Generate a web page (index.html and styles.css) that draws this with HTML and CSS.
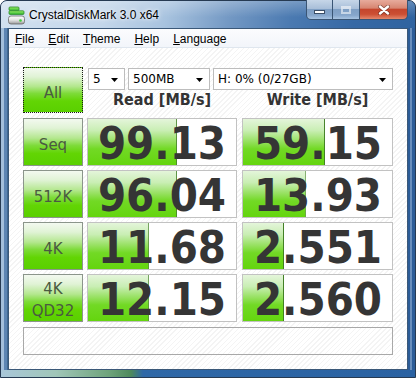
FILE: index.html
```html
<!DOCTYPE html>
<html>
<head>
<meta charset="utf-8">
<link rel="stylesheet" href="styles.css">
</head>
<body>
<div class="window">
  <div class="titlebar">
    <svg class="appicon" width="17" height="19" viewBox="0 0 17 19">
      <defs>
        <linearGradient id="gg" x1="0" y1="0" x2="0" y2="1">
          <stop offset="0" stop-color="#9ef06a"/>
          <stop offset="1" stop-color="#2fb42f"/>
        </linearGradient>
        <linearGradient id="dg" x1="0" y1="0" x2="0" y2="1">
          <stop offset="0" stop-color="#ffffff"/>
          <stop offset="0.5" stop-color="#e4e4e4"/>
          <stop offset="1" stop-color="#9a9a9a"/>
        </linearGradient>
      </defs>
      <rect x="1" y="1" width="10" height="3.6" rx="1" fill="url(#gg)" stroke="#2a8a2a" stroke-width="0.8"/>
      <rect x="1" y="4.8" width="15" height="3.6" rx="1" fill="url(#gg)" stroke="#2a8a2a" stroke-width="0.8"/>
      <rect x="0.5" y="10" width="16" height="8" rx="2.5" fill="url(#dg)" stroke="#6a6a6a" stroke-width="0.8"/>
      <circle cx="12.5" cy="14.5" r="1.3" fill="#3ccf3c"/>
    </svg>
    <span class="title">CrystalDiskMark 3.0 x64</span>
    <div class="caption">
      <div class="cbtn min"><span class="g-min"></span></div>
      <div class="cbtn max"><span class="g-max"></span></div>
      <div class="cbtn close">
        <svg width="12" height="10" viewBox="0 0 12 10">
          <path d="M2 1.5 L10 8.5 M10 1.5 L2 8.5" stroke="#4a1e16" stroke-width="4" stroke-linecap="round" opacity="0.55"/>
          <path d="M2 1.5 L10 8.5 M10 1.5 L2 8.5" stroke="#ffffff" stroke-width="2.4" stroke-linecap="round"/>
        </svg>
      </div>
    </div>
  </div>
  <div class="client">
    <div class="menubar">
      <span><u>F</u>ile</span>
      <span><u>E</u>dit</span>
      <span><u>T</u>heme</span>
      <span><u>H</u>elp</span>
      <span><u>L</u>anguage</span>
    </div>
    <div class="content">
      <div class="top">
        <div class="btn all">All</div>
        <div class="controls">
          <div class="combos">
            <div class="combo c1"><span>5</span><svg class="arrow" width="7" height="4" viewBox="0 0 7 4"><path d="M0 0H7L3.5 4Z" fill="#000"/></svg></div>
            <div class="combo c2"><span>500MB</span><svg class="arrow" width="7" height="4" viewBox="0 0 7 4"><path d="M0 0H7L3.5 4Z" fill="#000"/></svg></div>
            <div class="combo c3"><span>H: 0% (0/27GB)</span><svg class="arrow" width="7" height="4" viewBox="0 0 7 4"><path d="M0 0H7L3.5 4Z" fill="#000"/></svg></div>
          </div>
          <div class="headers">
            <div class="hdr read">Read [MB/s]</div>
            <div class="hdr write">Write [MB/s]</div>
          </div>
        </div>
      </div>
      <div class="row">
        <div class="btn">Seq</div>
        <div class="cell read" style="--w:60%"><span class="val">99.13</span></div>
        <div class="cell write" style="--w:55%"><span class="val">59.15</span></div>
      </div>
      <div class="row">
        <div class="btn">512K</div>
        <div class="cell read" style="--w:60%"><span class="val">96.04</span></div>
        <div class="cell write" style="--w:42%"><span class="val">13.93</span></div>
      </div>
      <div class="row">
        <div class="btn">4K</div>
        <div class="cell read" style="--w:41%"><span class="val">11.68</span></div>
        <div class="cell write" style="--w:27.5%"><span class="val">2.551</span></div>
      </div>
      <div class="row">
        <div class="btn two">4K<br>QD32</div>
        <div class="cell read" style="--w:41%"><span class="val">12.15</span></div>
        <div class="cell write" style="--w:27.5%"><span class="val">2.560</span></div>
      </div>
      <div class="status"></div>
    </div>
  </div>
</div>
</body>
</html>
```

FILE: styles.css
```css
* { box-sizing: border-box; }
html, body { margin: 0; padding: 0; }
body {
  width: 416px;
  height: 378px;
  overflow: hidden;
  background: #ffffff;
  font-family: "DejaVu Sans", sans-serif;
}

.window {
  width: 416px;
  height: 378px;
  border: 1px solid #263a52;
  border-radius: 7px 7px 0 0;
  display: flex;
  flex-direction: column;
  padding: 0 7px 7px;
  background:
    linear-gradient(to right, #a9c7d9 0, #a0c6b8 55px, #6ea37b 108px, #4d895c 130px, #2f68a7 142px, #2a62a2 100%) 0 100% / 100% 7px no-repeat,
    linear-gradient(to right, #a3bfdb 0 3px, #5d85b3 3px 6px, #3f6891 6px) 0 0 / 7px 100% no-repeat,
    linear-gradient(to right, #2c5c97 0 2px, #6a8fbc 2px 4px, #2d5d98 4px) 100% 0 / 7px 100% no-repeat,
    #4a76aa;
}

.titlebar {
  margin: 0 -7px;
  height: 27px;
  padding-left: 7px;
  display: flex;
  align-items: center;
  border-radius: 6px 6px 0 0;
  background:
    linear-gradient(to bottom, rgba(255,255,255,0.25), rgba(255,255,255,0) 60%),
    linear-gradient(100deg, #d2e1f0 0%, #c3d6ea 25%, #a8c3df 40%, #7499c4 55%, #4b7ab1 70%, #3669a5 85%, #2f63a0 100%);
}
.appicon { flex: none; margin-right: 4px; margin-top: 1px; }
.title {
  font-family: "Liberation Sans", Arial, sans-serif;
  font-size: 12px;
  color: #000;
  text-shadow: 0 0 6px #fff, 0 0 3px rgba(255,255,255,0.9);
}
.caption {
  display: flex;
  margin: -1px 7px 0 auto;
  align-self: flex-start;
  height: 20px;
}
.cbtn {
  height: 20px;
  border: 1px solid #3a5574;
  border-top: none;
  display: flex;
  justify-content: center;
  align-items: center;
}
.min, .max {
  width: 27px;
  background: linear-gradient(to bottom, #c6d6e8 0%, #a9bfd9 45%, #7f9fc4 50%, #86a6cb 80%, #a8c4e2 100%);
}
.min { border-radius: 0 0 0 5px; align-items: flex-end; padding-bottom: 5px; }
.max { border-left: none; }
.close {
  width: 48px;
  border-left: none;
  border-radius: 0 0 5px 0;
  background: linear-gradient(to bottom, #e7ab9c 0%, #d78672 42%, #c5462d 50%, #cc4f33 75%, #e4876b 100%);
  padding-top: 1px;
}
.g-min {
  width: 11px;
  height: 4px;
  background: #fff;
  border: 1px solid #3b4e66;
}
.g-max {
  width: 10px;
  height: 8px;
  border: 2px solid rgba(255,255,255,0.55);
  border-top-width: 3px;
}

.client {
  flex: 1;
  display: flex;
  flex-direction: column;
  border: 1px solid #3b5878;
  background: repeating-linear-gradient(135deg, #ffffff 0 2.6px, #f4f4f4 2.6px 3.6px);
}
.menubar {
  height: 19px;
  display: flex;
  align-items: center;
  gap: 14px;
  padding: 1px 0 0 6px;
  border-bottom: 1px solid #dfe6ee;
  background: linear-gradient(to bottom, #fbfcfe, #f2f5fa);
  font-family: "Liberation Sans", Arial, sans-serif;
  font-size: 12px;
  color: #000;
}
.menubar u { text-decoration: underline; text-underline-offset: 1px; }

.content {
  flex: 1;
  padding: 19px 0 0 14px;
}
.top {
  display: flex;
  gap: 4px;
  height: 46px;
  margin-bottom: 5px;
}
.btn {
  width: 60px;
  flex: none;
  border: 1px solid #8b958b;
  background: linear-gradient(to bottom, #f3f9f0 0%, #e0f3d5 20%, #b3e78d 42%, #7ddb38 58%, #62d504 75%, #5ad000 100%);
  display: flex;
  align-items: center;
  justify-content: center;
  text-align: center;
  font-family: "DejaVu Sans", sans-serif;
  font-size: 15px;
  color: #4a5a41;
  padding-top: 5px;
}
.btn.all { border: 1px dotted #1a1a1a; padding-top: 6px; }
.btn.two { line-height: 22px; padding-top: 3px; }

.controls {
  width: 306px;
  display: flex;
  flex-direction: column;
}
.combos {
  display: flex;
  gap: 3px;
  margin-top: 1px;
  height: 22px;
  padding-left: 1px;
}
.combo {
  height: 22px;
  border: 1px solid #bdbdbd;
  background: #fff;
  display: flex;
  align-items: center;
  justify-content: space-between;
  padding: 0 6px 0 4px;
  font-family: "DejaVu Sans", sans-serif;
  font-size: 12px;
  color: #000;
}
.c1 { width: 37px; }
.c2 { width: 82px; }
.c3 { width: 180px; padding-right: 6px; }
.arrow { flex: none; margin-top: 1px; }

.headers {
  display: flex;
  gap: 4px;
  padding-top: 1px;
}
.hdr {
  text-align: center;
  font-family: "DejaVu Sans Condensed", "DejaVu Sans", sans-serif;
  font-stretch: condensed;
  font-weight: bold;
  font-size: 16px;
  line-height: 18px;
  color: #333;
}
.hdr.read { width: 150px; }
.hdr.write { width: 151px; margin-left: 1px; }

.row {
  display: flex;
  gap: 4px;
  height: 48px;
  margin-bottom: 4px;
}
.cell {
  border: 1px solid #c2c2c2;
  background-color: #fff;
  background-image:
    linear-gradient(to left, #3f7d22 0 1px, transparent 1px),
    linear-gradient(to bottom, #e4f5da 0%, #c9eeb4 25%, #98e163 48%, #72d925 65%, #64d50e 100%);
  background-size: var(--w) 100%, var(--w) 100%;
  background-repeat: no-repeat;
  text-align: right;
  padding: 4px 10px 0 0;
}
.cell.read { width: 150px; }
.cell.write { width: 151px; margin-left: 1px; }
.val {
  font-family: "DejaVu Sans Condensed", "DejaVu Sans", sans-serif;
  font-stretch: condensed;
  font-weight: bold;
  font-size: 45px;
  line-height: 42px;
  color: #353535;
}

.status {
  margin-top: 5px;
  width: 370px;
  height: 28px;
  border: 1px solid #a8a8a8;
}
```
